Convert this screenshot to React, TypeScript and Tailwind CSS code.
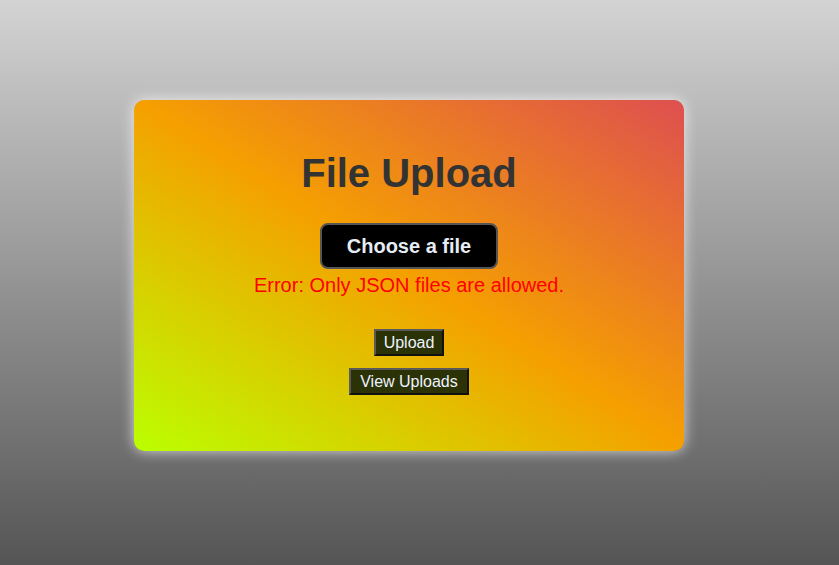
import React from "react";

export default function App() {
  return (
    <div
      className="min-h-screen w-full flex justify-start pl-[134px] pt-[100px] bg-[linear-gradient(to_bottom,#d3d3d3,#555555)]"
      style={{ fontFamily: '"Liberation Sans", Arial, sans-serif' }}
    >
      <div className="w-[550px] h-[351px] rounded-[10px] flex flex-col items-center pt-[50px] bg-[linear-gradient(to_top_right,#bbff00_0%,#f5a000_50%,#de4f50_100%)] shadow-[0_0_14px_rgba(255,255,255,0.75)]">
        <h1 className="text-[40px] leading-[46px] font-bold text-[#333333]">File Upload</h1>
        <button className="mt-[27px] h-[46px] px-[25px] rounded-[8px] border-2 border-[#555555] bg-black text-[20px] leading-[22px] font-bold text-[#e6ecf5]">
          Choose a file
        </button>
        <p className="mt-[5px] text-[20px] leading-[23px] text-[#ff0000]">
          Error: Only JSON files are allowed.
        </p>
        <button className="mt-[32px] px-2 py-[2px] text-[16px] leading-[19px] text-[#eef3ff] bg-[#2a3206] border-2 border-t-[#5a5a5a] border-l-[#5a5a5a] border-r-[#111111] border-b-[#111111]">
          Upload
        </button>
        <button className="mt-[12px] px-[9px] py-[2px] text-[16px] leading-[19px] text-[#eef3ff] bg-[#2a3206] border-2 border-t-[#5a5a5a] border-l-[#5a5a5a] border-r-[#111111] border-b-[#111111]">
          View Uploads
        </button>
      </div>
    </div>
  );
}
